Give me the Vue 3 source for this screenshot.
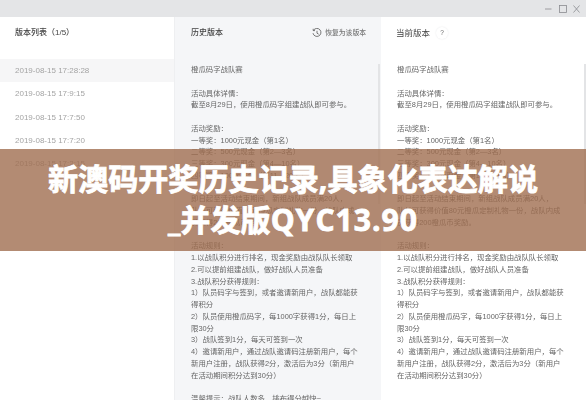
<script setup>
const versions = ['2019-08-15 17:28:28', '2019-08-15 17:9:15', '2019-08-15 17:7:50', '2019-08-15 17:7:20', '2019-08-15 17:2:15']
const rightLines = ['橙瓜码字战队赛', '', '活动具体详情：', '截至8月29日，使用橙瓜码字组建战队即可参与。', '', '活动奖励：', '一等奖：1000元现金（第1名）', '二等奖：500元现金（第2—3名）', '三等奖：300元现金（第4—10名）', '四等奖：100元现金（第11—20名）', '', '即日起至活动结束期间，新组战队成员满20人，', '队长可获得价值80元橙瓜定制礼物一份，战队内成', '员获得200橙瓜币奖励。', '', '活动规则：', '1.以战队积分进行排名，现金奖励由战队队长领取', '2.可以提前组建战队，做好战队人员准备', '3.战队积分获得规则：', '1）队员码字与签到，或者邀请新用户，战队都能获', '得积分', '2）队员使用橙瓜码字，每1000字获得1分，每日上', '限30分', '3）战队签到1分，每天可签到一次', '4）邀请新用户，通过战队邀请码注册新用户，每个', '新用户注册，战队获得2分，激活后为3分（新用户', '在活动期间积分达到30分）']
const midLines = [...rightLines, '', '温馨提示：战队人数多，排布得分越快~']
</script>

<template>
  <div class="page">
    <div class="content">
      <div class="topbar">
        <svg class="winctl" width="35" height="10" viewBox="0 0 35 10">
          <path d="M0 5h6.5" />
          <rect x="14.5" y="1.5" width="7" height="7" />
          <path d="M28.5 1.5l6 7M34.5 1.5l-6 7" />
        </svg>
      </div>
      <div class="cols">
        <section class="col list">
          <h2 class="head">版本列表（1/5）</h2>
          <div v-for="(v, i) in versions" :key="v" class="row" :class="{ active: i === 0 }">{{ v }}</div>
        </section>
        <section class="col mid">
          <header class="head between">
            <h2 class="head-title">历史版本</h2>
            <span class="restore">
              <svg width="10" height="10" viewBox="0 0 10 10">
                <path d="M1.6 2.2A4 4 0 1 1 1 5.2M1.2 0.8v1.8h1.8M5 2.8v2.4l1.7 1" />
              </svg>
              恢复为该版本
            </span>
          </header>
          <div class="doc">
            <p v-for="(l, i) in midLines" :key="i" class="line">{{ l }}</p>
          </div>
          <i class="scroll"></i>
        </section>
        <section class="col cur">
          <header class="head">
            <h2 class="head-title big">当前版本</h2>
            <span class="help">?</span>
          </header>
          <div class="doc">
            <p v-for="(l, i) in rightLines" :key="i" class="line">{{ l }}</p>
          </div>
          <i class="scroll"></i>
        </section>
      </div>
    </div>
    <div class="band">
      <h1 class="title">新澳码开奖历史记录,具象化表达解说<br />_并发版<span class="latin">QYC13.90</span></h1>
    </div>
  </div>
</template>

<style>
html, body { margin: 0; background: #fff; }
</style>

<style scoped>
.page {
  position: relative;
  width: 586px;
  height: 400px;
  overflow: hidden;
  background: #fff;
  font-family: "Liberation Sans", "Noto Sans CJK SC", sans-serif;
}
.content {
  height: 400px;
  display: flex;
  flex-direction: column;
  filter: blur(0.4px);
}
.topbar {
  height: 17px;
  flex: none;
  background: #e4e5e7;
  display: flex;
  justify-content: flex-end;
  align-items: center;
  padding-right: 6px;
}
.winctl { fill: none; stroke: #8a8c90; stroke-width: 0.8; }
.cols {
  flex: 1;
  min-height: 0;
  display: grid;
  grid-template-columns: 175px 206px 205px;
}
.col { position: relative; overflow: hidden; min-width: 0; }
.list { background: #fff; border-right: 1px solid #eeeff1; box-sizing: border-box; }
.mid { background: #f5f6f8; }
.cur { background: #fff; }
.head {
  height: 42px;
  box-sizing: border-box;
  padding: 10px 0 0 15px;
  margin: 0;
  font-size: 8px;
  line-height: 12px;
  font-weight: 500;
  color: #444;
}
.mid .head { padding-left: 16px; padding-right: 15px; }
.cur .head { display: flex; align-items: flex-start; gap: 6px; padding-left: 15px; }
.between { display: flex; justify-content: space-between; align-items: flex-start; }
.head-title { margin: 0; font-size: 8px; line-height: 12px; font-weight: 500; color: #444; }
.head-title.big { font-size: 8.5px; font-weight: 400; }
.restore {
  display: flex;
  align-items: center;
  gap: 3px;
  height: 11px;
  font-size: 6.8px;
  color: #777;
}
.restore svg { fill: none; stroke: #555; stroke-width: 0.8; }
.help {
  width: 12px;
  height: 12px;
  border-radius: 50%;
  background: #fff;
  box-shadow: 0 0 2px #e6e7e9;
  font-size: 6.5px;
  line-height: 12px;
  text-align: center;
  color: #666;
}
.row {
  height: 23.33px;
  line-height: 23.33px;
  padding-left: 15px;
  font-size: 8px;
  color: #a4a4a4;
}
.row.active { background: #f6f6f7; }
.doc { padding: 5px 14px 0 16px; height: 341px; box-sizing: border-box; overflow: hidden; }
.line {
  margin: 0;
  min-height: 11.75px;
  font-size: 7.4px;
  line-height: 11.75px;
  color: #666;
  white-space: nowrap;
}
.scroll {
  position: absolute;
  right: 1px;
  top: 47px;
  height: 140px;
  width: 2px;
  background: #e3e4e6;
}
.cur .scroll { right: 0; }
.band {
  position: absolute;
  left: 0;
  right: 0;
  top: 149px;
  height: 102px;
  box-sizing: border-box;
  padding-bottom: 2px;
  background: rgba(160, 110, 80, 0.8);
  display: flex;
  align-items: center;
  justify-content: center;
}
.title {
  margin: 0;
  text-align: center;
  color: #fff;
  font-family: "Open Sans", "Noto Sans CJK SC", sans-serif;
  font-size: 30.1px;
  line-height: 41px;
  font-weight: 700;
  -webkit-text-stroke: 0.8px #fff;
  white-space: nowrap;
}
.latin { letter-spacing: 1px; }
</style>
